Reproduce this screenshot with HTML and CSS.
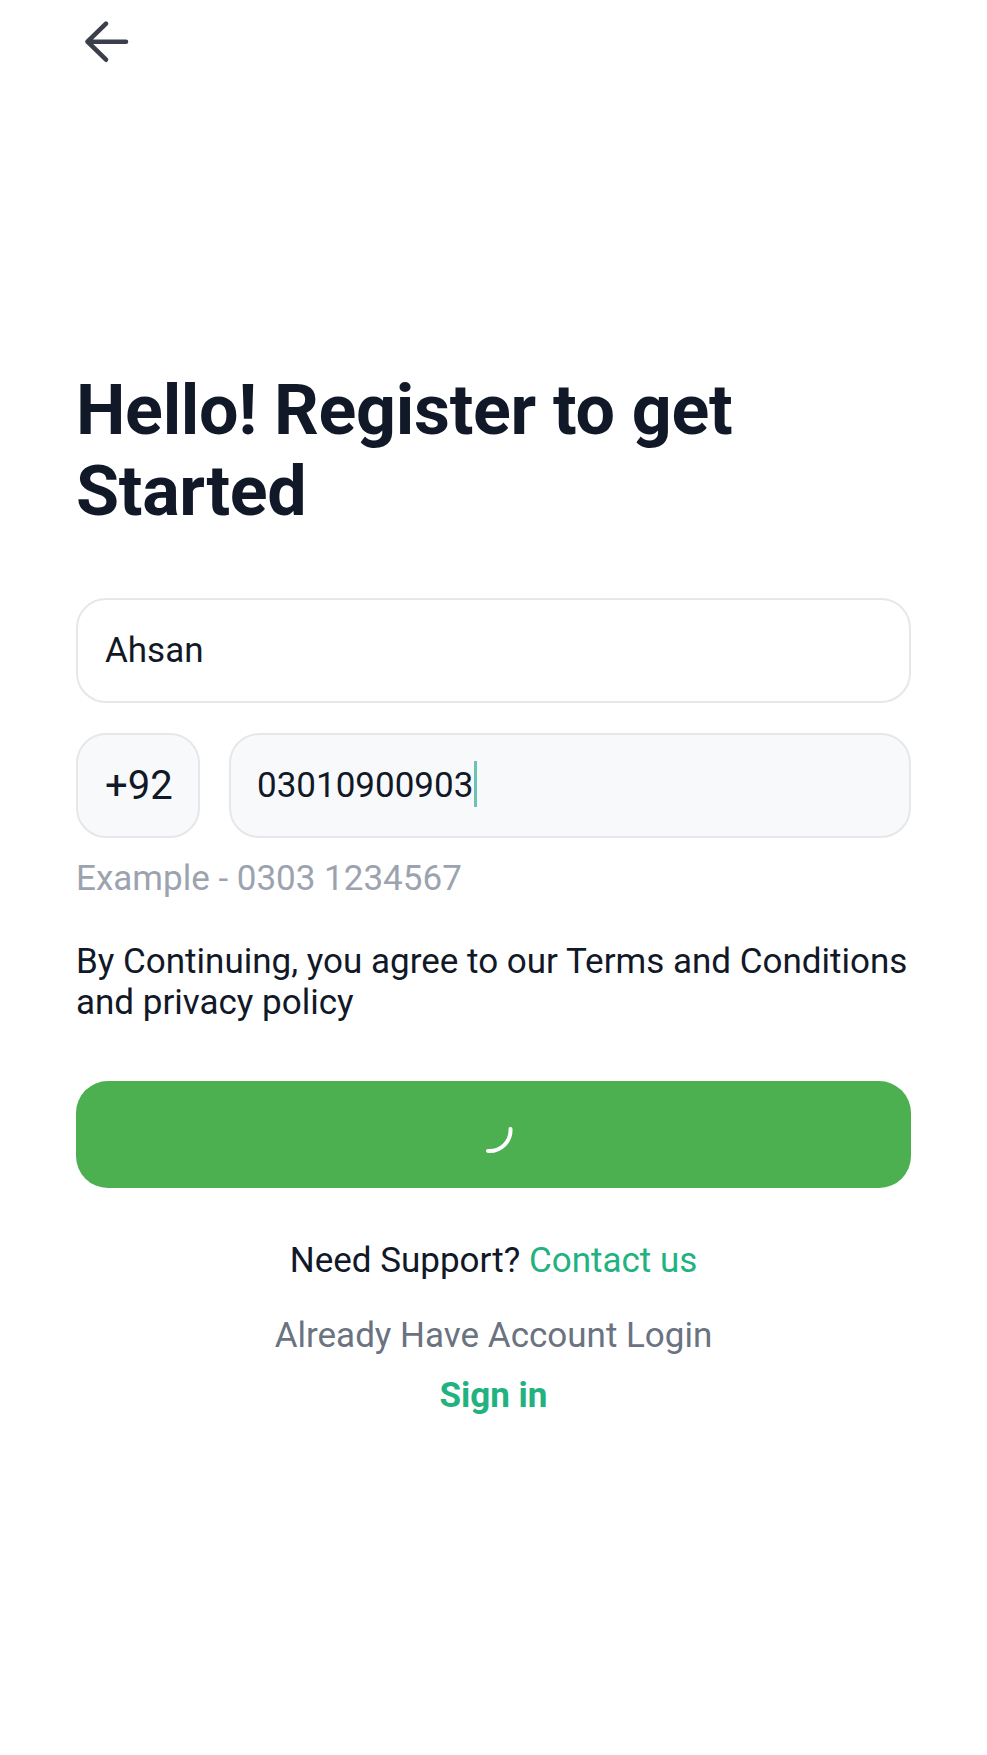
FILE: index.html
```html
<!DOCTYPE html>
<html lang="en">
<head>
<meta charset="utf-8">
<title>Register</title>
<link rel="stylesheet" href="styles.css">
</head>
<body>
<div class="screen">
  <header class="topbar">
    <svg class="back" width="48" height="48" viewBox="0 0 48 48" aria-label="Back">
      <path d="M43 23.7H4.5M23 5.7L4.5 23.7L23 41.7" fill="none" stroke="#3b3f4c" stroke-width="4.6" stroke-linecap="round" stroke-linejoin="round"/>
    </svg>
  </header>

  <main class="card">
    <h1 class="title">Hello! Register to get Started</h1>

    <div class="field field-name">Ahsan</div>

    <div class="phone-row">
      <div class="field code">+92</div>
      <div class="field phone"><span class="value">03010900903</span><span class="caret"></span></div>
    </div>
    <p class="hint">Example - 0303 1234567</p>

    <p class="terms">By Continuing, you agree to our Terms and Conditions and privacy policy</p>

    <button class="submit" type="button" aria-label="Loading">
      <svg width="48" height="48" viewBox="0 0 48 48">
        <path d="M40.5 18A21 21 0 0 1 18 40" fill="none" stroke="#ffffff" stroke-width="4" stroke-linecap="round"/>
      </svg>
    </button>
  </main>

  <footer class="links">
    <p class="support">Need Support? <a class="green" href="#">Contact us</a></p>
    <p class="already">Already Have Account Login</p>
    <a class="signin" href="#">Sign in</a>
  </footer>
</div>
</body>
</html>
```

FILE: styles.css
```css
* { box-sizing: border-box; }

html, body {
  margin: 0;
  padding: 0;
  background: #ffffff;
}

body {
  font-family: Roboto, "Liberation Sans", sans-serif;
  color: #111827;
}

.screen {
  width: 987px;
  min-height: 1755px;
  overflow: hidden;
}

.topbar {
  height: 66px;
  padding: 18px 0 0 83px;
}

.back { display: block; }

.card {
  position: relative;
  margin: 204px 30px 0;
  padding: 100px 46px 0 46px;
  background: #ffffff;
}

.card::before {
  content: "";
  position: absolute;
  left: 0;
  right: 0;
  top: 0;
  height: 993px;
  box-shadow: 0 0 22px rgba(110, 116, 135, 0.10);
  z-index: -1;
}

.card::after {
  content: "";
  position: absolute;
  left: 0;
  right: 0;
  top: 790px;
  height: 170px;
  box-shadow: 0 0 24px rgba(76, 175, 80, 0.18);
  z-index: -1;
}

.title {
  margin: 0;
  font-size: 70px;
  line-height: 81px;
  font-weight: 700;
  color: #111827;
  letter-spacing: -0.3px;
  max-width: 700px;
}

.field {
  display: flex;
  align-items: center;
  height: 105px;
  border: 2px solid #e6e7ea;
  border-radius: 30px;
  background: #ffffff;
  font-size: 35px;
  color: #111827;
  padding-left: 27px;
}

.field-name { margin-top: 66px; }

.phone-row {
  display: flex;
  gap: 29px;
  margin-top: 30px;
}

.code {
  width: 124px;
  flex: none;
  background: #f8f9fb;
  font-size: 40px;
  padding-left: 27px;
}

.phone {
  flex: 1;
  background: #f8f9fb;
  padding-left: 26px;
  font-size: 35px;
}

.caret {
  display: inline-block;
  width: 3px;
  height: 46px;
  background: #6cc3b5;
  margin-left: 1px;
  position: relative;
  top: -2px;
}

.hint {
  margin: 21px 0 0;
  font-size: 35px;
  line-height: 40px;
  color: #9ca3af;
}

.terms {
  margin: 42px 0 0;
  font-size: 35px;
  line-height: 41px;
  color: #111827;
}

.submit {
  display: flex;
  align-items: center;
  justify-content: center;
  width: 100%;
  height: 107px;
  margin-top: 58px;
  border: none;
  border-radius: 32px;
  background: #4caf50;
  padding: 0;
}

.submit svg { display: block; }

.links {
  display: flex;
  flex-direction: column;
  align-items: center;
  margin-top: 53px;
  font-size: 35px;
  line-height: 40px;
}

.links p { margin: 0; }

.support { color: #111827; }

.green {
  color: #22b27f;
  text-decoration: none;
}

.already {
  margin-top: 35px !important;
  color: #6b7280;
}

.signin {
  margin-top: 20px;
  color: #22b27f;
  font-weight: 700;
  text-decoration: none;
}
```
